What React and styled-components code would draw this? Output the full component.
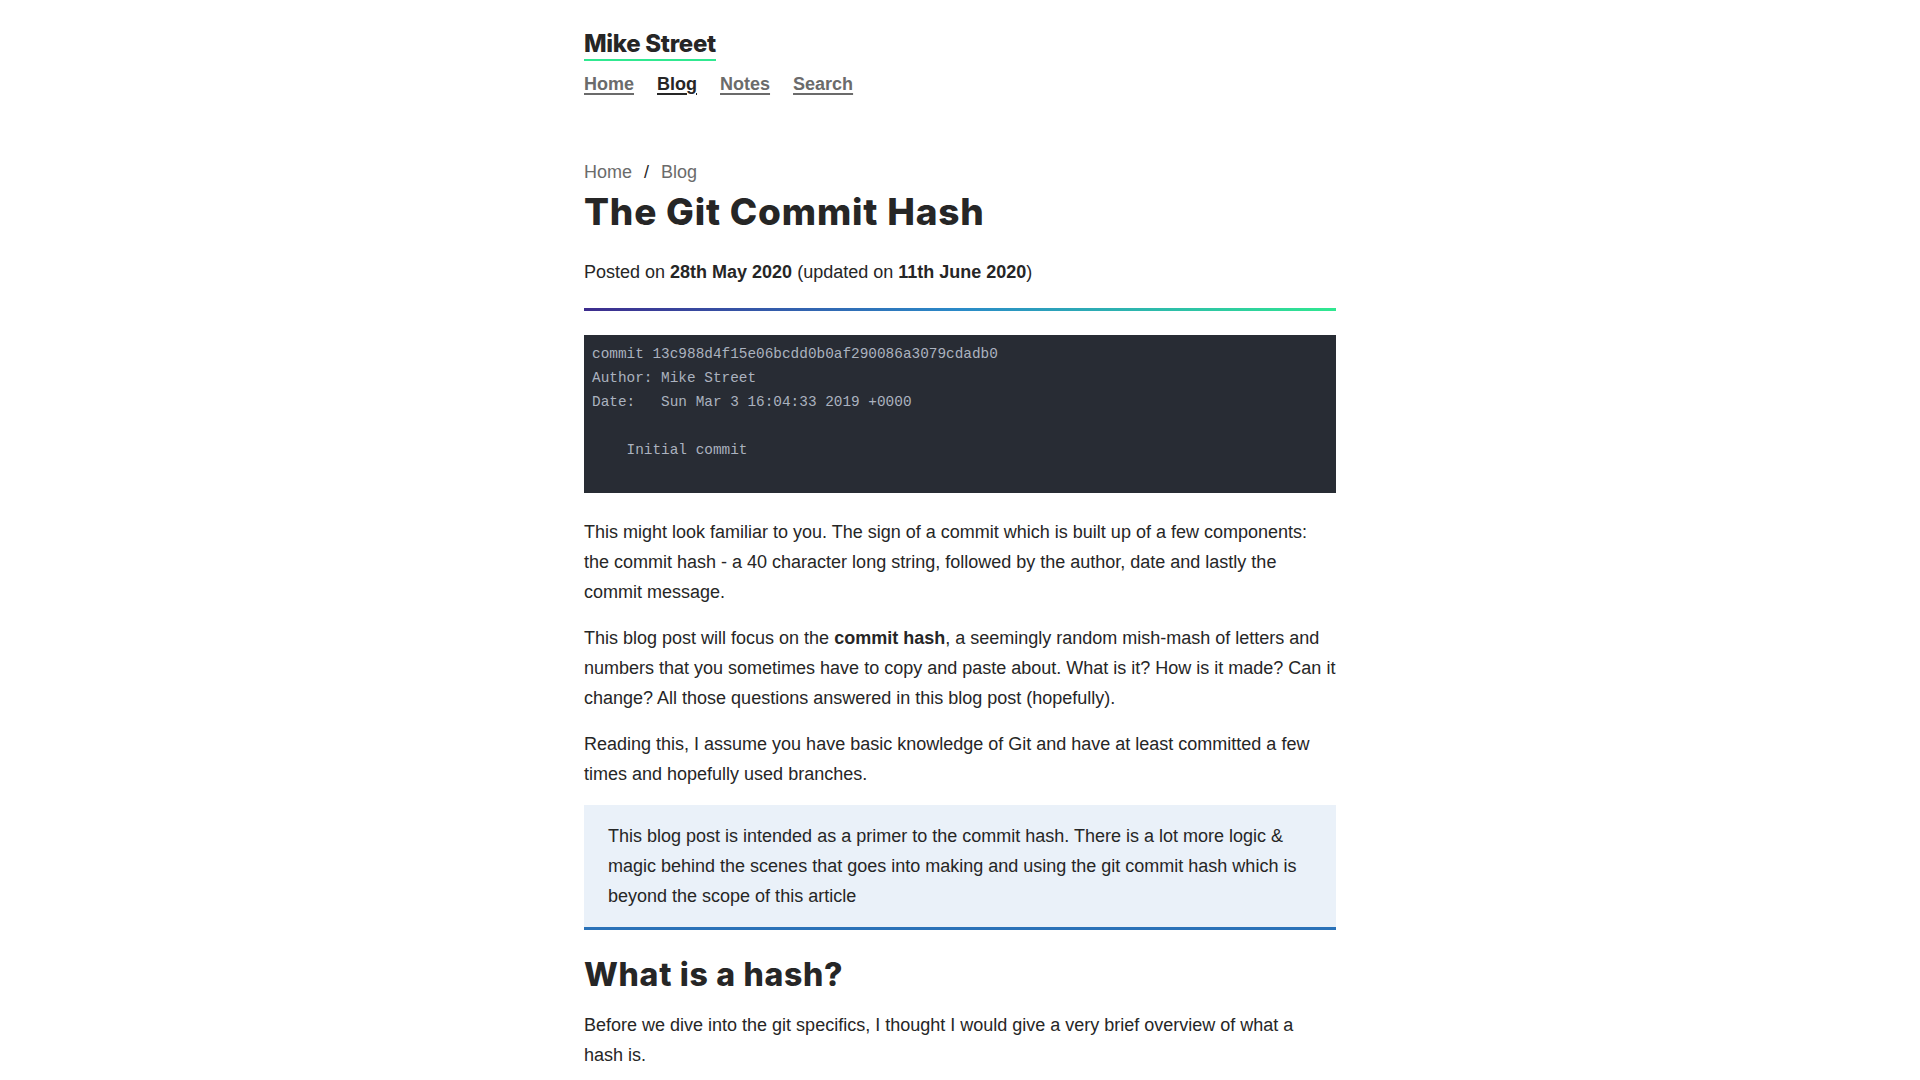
import React from "react";
import styled, { createGlobalStyle } from "styled-components";

const GlobalStyle = createGlobalStyle`
  html, body { margin: 0; padding: 0; background: #ffffff; }
  body {
    font-family: "Liberation Sans", Arial, sans-serif;
    font-size: 18px;
    line-height: 30px;
    color: #262626;
  }
  * { box-sizing: border-box; }
`;

const Page = styled.div`
  max-width: 752px;
  margin: 0 auto;
  padding-top: 30px;
`;

const Header = styled.header`
  display: flex;
  flex-direction: column;
  align-items: flex-start;
`;

const SiteTitle = styled.a`
  font-family: "Inter", "Noto Sans", sans-serif;
  font-weight: 800;
  font-size: 24px;
  line-height: 28.8px;
  letter-spacing: -0.3px;
  color: #262626;
  text-decoration: none;
  border-bottom: 2px solid #30e890;
`;

const Nav = styled.nav`
  display: flex;
  gap: 23px;
  margin-top: 10px;
`;

const NavLink = styled.a`
  font-weight: 700;
  font-size: 18px;
  line-height: 27px;
  color: ${(p) => (p.$active ? "#262626" : "#6b6b6b")};
  text-decoration: underline;
  text-decoration-thickness: 2px;
  text-underline-offset: 3px;
`;

const Main = styled.main`
  margin-top: 59px;
`;

const Breadcrumb = styled.ol`
  display: flex;
  gap: 12px;
  list-style: none;
  margin: 0;
  padding: 0;
  color: #6b6b6b;
  font-size: 18px;
  line-height: 30px;
`;

const Crumb = styled.li`
  display: flex;
  gap: 12px;
`;

const Sep = styled.span`
  color: #262626;
`;

const Title = styled.h1`
  font-family: "Inter", "Noto Sans", sans-serif;
  font-weight: 800;
  font-size: 37px;
  line-height: 43px;
  letter-spacing: 0.8px;
  margin: 3px 0 0;
  color: #262626;
`;

const Meta = styled.p`
  margin: 24px 0 0;
`;

const Divider = styled.div`
  height: 3px;
  margin-top: 21px;
  background: linear-gradient(90deg, #3d2c8d 0%, #2a8ac8 50%, #30e890 100%);
`;

const Code = styled.pre`
  margin: 24px 0 0;
  padding: 7px 8px 31px;
  background: #282c34;
  color: #abb2bf;
  font-family: "Liberation Mono", "DejaVu Sans Mono", monospace;
  font-size: 14.4px;
  line-height: 24px;
  white-space: pre;
`;

const Para = styled.p`
  margin: ${(p) => (p.$first ? "24px" : "16px")} 0 0;
`;

const Note = styled.blockquote`
  margin: 16px 0 0;
  padding: 16px 24px;
  background: #eaf1f9;
  border-bottom: 3px solid #2a72b8;
`;

const NoteText = styled.p`
  margin: 0;
`;

const SubHeading = styled.h2`
  font-family: "Inter", "Noto Sans", sans-serif;
  font-weight: 800;
  font-size: 32px;
  line-height: 38px;
  letter-spacing: 0.7px;
  margin: 26px 0 0;
  color: #262626;
`;

const codeText = `commit 13c988d4f15e06bcdd0b0af290086a3079cdadb0
Author: Mike Street
Date:   Sun Mar 3 16:04:33 2019 +0000

    Initial commit`;

export default function App() {
  return (
    <>
      <GlobalStyle />
      <Page>
        <Header>
          <SiteTitle href="#">Mike Street</SiteTitle>
          <Nav>
            <NavLink href="#">Home</NavLink>
            <NavLink href="#" $active>Blog</NavLink>
            <NavLink href="#">Notes</NavLink>
            <NavLink href="#">Search</NavLink>
          </Nav>
        </Header>
        <Main>
          <Breadcrumb>
            <Crumb>Home</Crumb>
            <Crumb><Sep>/</Sep>Blog</Crumb>
          </Breadcrumb>
          <Title>The Git Commit Hash</Title>
          <Meta>
            Posted on <strong>28th May 2020</strong> (updated on <strong>11th June 2020</strong>)
          </Meta>
          <Divider />
          <Code>{codeText}</Code>
          <Para $first>
            This might look familiar to you. The sign of a commit which is built up of a few components: the commit hash - a 40 character long string, followed by the author, date and lastly the commit message.
          </Para>
          <Para>
            This blog post will focus on the <strong>commit hash</strong>, a seemingly random mish-mash of letters and numbers that you sometimes have to copy and paste about. What is it? How is it made? Can it change? All those questions answered in this blog post (hopefully).
          </Para>
          <Para>
            Reading this, I assume you have basic knowledge of Git and have at least committed a few times and hopefully used branches.
          </Para>
          <Note>
            <NoteText>
              This blog post is intended as a primer to the commit hash. There is a lot more logic &amp; magic behind the scenes that goes into making and using the git commit hash which is beyond the scope of this article
            </NoteText>
          </Note>
          <SubHeading>What is a hash?</SubHeading>
          <Para>
            Before we dive into the git specifics, I thought I would give a very brief overview of what a hash is.
          </Para>
        </Main>
      </Page>
    </>
  );
}
